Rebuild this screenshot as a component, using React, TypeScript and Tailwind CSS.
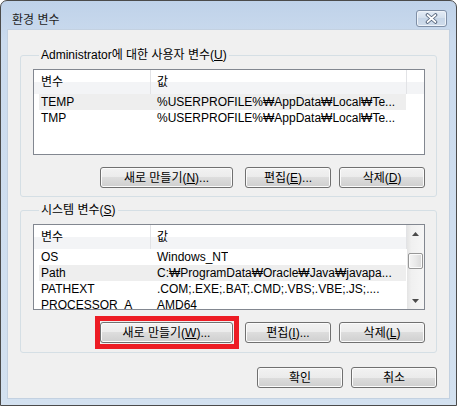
import React from "react";

const btnCls =
  "h-[21px] rounded-[3px] border border-[#707070] bg-[linear-gradient(to_bottom,#f2f2f2_0%,#ebebeb_50%,#dddddd_50%,#cfcfcf_100%)] shadow-[inset_0_0_0_1px_#fbfbfb] text-[12px] leading-[14px] text-black flex items-center justify-center";

function Btn({ w, children }: { w: string; children: React.ReactNode }) {
  return <button className={`${w} ${btnCls}`}>{children}</button>;
}

type Row = { name: string; value: string; sel?: boolean };

function Arrow({ down }: { down?: boolean }) {
  return (
    <div className="h-[17px] flex items-center justify-center">
      <svg width="7" height="4" viewBox="0 0 7 4">
        <polygon points={down ? "0,0 7,0 3.5,4" : "3.5,0 7,4 0,4"} fill="#4a4a4a" />
      </svg>
    </div>
  );
}

function ListView({ rows, scroll }: { rows: Row[]; scroll?: boolean }) {
  return (
    <div className="mt-[7px] h-[86px] border border-[#828790] bg-white flex">
      <div className="flex-1 min-w-0 flex flex-col overflow-hidden">
        {/* header */}
        <div className="flex h-[24px] shrink-0 bg-[linear-gradient(to_bottom,#ffffff_50%,#f3f4f6_50%)]">
          <div className="w-[117px] pl-[7px] border-r border-[#e2e3e6] flex items-center">변수</div>
          <div className="w-[256px] pl-[6px] border-r border-[#e2e3e6] flex items-center">값</div>
          <div className="flex-1" />
        </div>
        {rows.map((r) => (
          <div
            key={r.name}
            className={`ml-[5px] w-[367px] h-[16px] shrink-0 flex items-center ${r.sel ? "bg-[#eeeeee]" : ""}`}
          >
            <div className="w-[111px] pl-[2px] whitespace-nowrap overflow-hidden">{r.name}</div>
            <div className="pl-[7px] whitespace-nowrap overflow-hidden">{r.value}</div>
          </div>
        ))}
      </div>
      {scroll && (
        <div className="w-[17px] shrink-0 flex flex-col bg-[linear-gradient(to_right,#e4e4e4,#f0f0f0_25%,#f6f6f6)]">
          <Arrow />
          <div className="flex-1">
            <div className="mt-[11px] mx-[1px] h-[16px] rounded-[2px] border border-[#979797] bg-[linear-gradient(to_right,#f4f4f4,#e9e9e9_50%,#d9d9d9)] shadow-[inset_0_0_0_1px_#fbfbfb]" />
          </div>
          <Arrow down />
        </div>
      )}
    </div>
  );
}

function Group({
  title,
  last,
  children,
}: {
  title: React.ReactNode;
  last?: boolean;
  children: React.ReactNode;
}) {
  return (
    <fieldset
      className={`border border-[#d5dfe5] rounded-[3px] pl-[12px] pr-[11px] ${last ? "pb-[9px] mt-[6px]" : "pb-[8px]"}`}
    >
      <legend className="ml-[6px] px-[2px] leading-[14px] text-[12px]">{title}</legend>
      {children}
    </fieldset>
  );
}

export default function App() {
  const userRows: Row[] = [
    { name: "TEMP", value: "%USERPROFILE%₩AppData₩Local₩Te...", sel: true },
    { name: "TMP", value: "%USERPROFILE%₩AppData₩Local₩Te..." },
  ];
  const sysRows: Row[] = [
    { name: "OS", value: "Windows_NT" },
    { name: "Path", value: "C:₩ProgramData₩Oracle₩Java₩javapa...", sel: true },
    { name: "PATHEXT", value: ".COM;.EXE;.BAT;.CMD;.VBS;.VBE;.JS;...." },
    { name: "PROCESSOR_A", value: "AMD64" },
  ];

  return (
    <div className="w-[457px] h-[406px] bg-white font-['Liberation_Sans','Noto_Sans_CJK_KR',sans-serif] text-[12px] leading-[14px] text-black">
      <div className="w-full h-full flex flex-col rounded-t-[7px] border border-[#4b4b4b] bg-[linear-gradient(to_bottom,#bfd2e9,#cbdbee_40px,#d3e1f0)]">
        {/* title bar */}
        <div className="h-[29px] shrink-0 flex items-start justify-between pl-[11px] pr-[9px]">
          <div className="pt-[12px] text-[#1e1e1e]">환경 변수</div>
          <div className="mt-[9px] w-[31px] h-[17px] rounded-[3px] border border-[#7f8fa6] bg-[linear-gradient(to_bottom,#e4ecf6,#d2deec_50%,#c6d5e7_50%,#d0ddec)] shadow-[inset_0_0_0_1px_#eef3f9] flex items-center justify-center">
            <svg width="13" height="11" viewBox="0 0 13 11">
              <path d="M2.5 2 L10.5 9 M10.5 2 L2.5 9" stroke="#56657c" strokeWidth="3.6" strokeLinecap="round" />
              <path d="M2.5 2 L10.5 9 M10.5 2 L2.5 9" stroke="#ffffff" strokeWidth="1.7" strokeLinecap="round" />
            </svg>
          </div>
        </div>

        {/* client area */}
        <div className="flex-1 mx-[7px] mb-[7px] bg-[#f0f0f0] shadow-[0_0_0_1px_#c3d1e1] flex flex-col px-[12px] pt-[18px]">
          <Group
            title={
              <>
                Administrator에 대한 사용자 변수(<u>U</u>)
              </>
            }
          >
            <ListView rows={userRows} />
            <div className="mt-[12px] flex justify-end">
              <Btn w="w-[133px]">
                새로 만들기(<u>N</u>)...
              </Btn>
              <div className="ml-[12px]">
                <Btn w="w-[86px]">
                  편집(<u>E</u>)...
                </Btn>
              </div>
              <div className="ml-[8px]">
                <Btn w="w-[86px]">
                  삭제(<u>D</u>)
                </Btn>
              </div>
            </div>
          </Group>

          <Group
            last
            title={
              <>
                시스템 변수(<u>S</u>)
              </>
            }
          >
            <ListView rows={sysRows} scroll />
            <div className="mt-[12px] flex justify-end">
              <div className="relative">
                <Btn w="w-[133px]">
                  새로 만들기(<u>W</u>)...
                </Btn>
                <div className="absolute -left-[5px] -right-[6px] -top-[6px] -bottom-[6px] border-[5px] border-[#ed1c24]" />
              </div>
              <div className="ml-[12px]">
                <Btn w="w-[86px]">
                  편집(<u>I</u>)...
                </Btn>
              </div>
              <div className="ml-[8px]">
                <Btn w="w-[86px]">
                  삭제(<u>L</u>)
                </Btn>
              </div>
            </div>
          </Group>

          <div className="mt-[14px] flex justify-end">
            <Btn w="w-[86px]">확인</Btn>
            <div className="ml-[8px]">
              <Btn w="w-[86px]">취소</Btn>
            </div>
          </div>
        </div>
      </div>
    </div>
  );
}
